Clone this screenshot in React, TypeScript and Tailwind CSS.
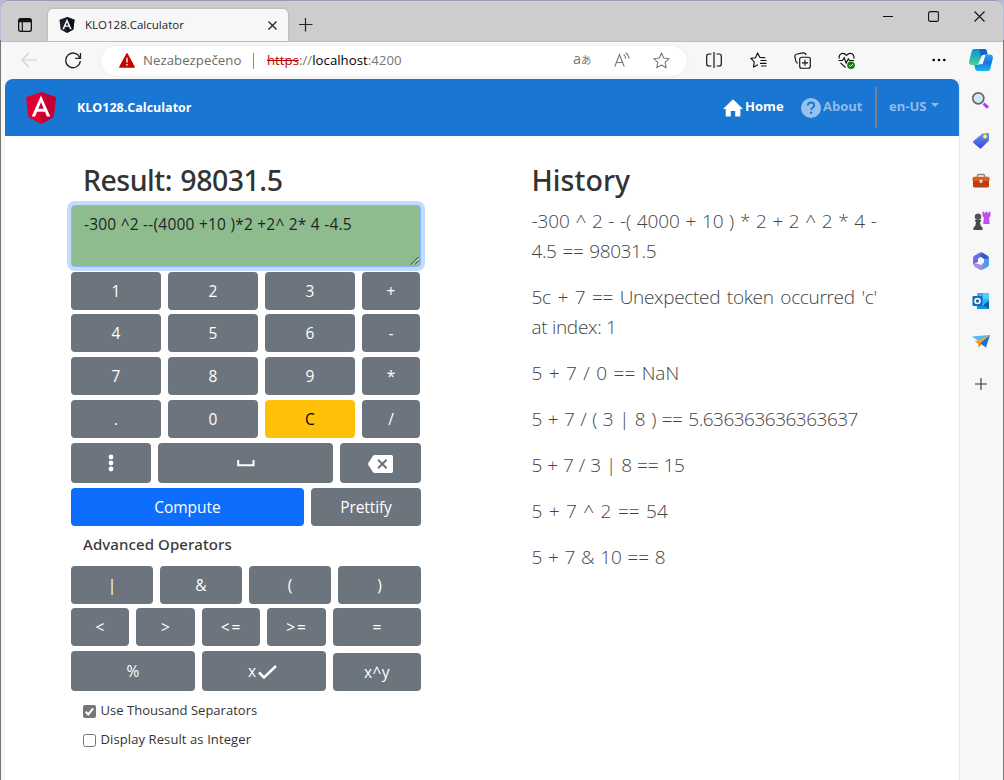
import type { ReactNode } from "react";

type KeyProps = { className?: string; children: ReactNode };

function Key({ className = "", children }: KeyProps) {
  return (
    <button
      className={
        "flex items-center justify-center rounded-[4px] font-['Open_Sans',sans-serif] text-[15.5px] leading-6 " +
        (className.includes("bg-") ? "" : "bg-[#6c757d] ") +
        (className.includes("text-black") ? "" : "text-white ") +
        className
      }
    >
      {children}
    </button>
  );
}

function AngularShield({ dark = false, className }: { dark?: boolean; className: string }) {
  return (
    <svg viewBox="0 0 30 32" className={className}>
      <path d="M15 0 0 5.3 2.3 25 15 32l12.700-7L30 5.300z" fill={dark ? "#1a202b" : "#dd0031"} />
      <path d="M15 0v32l12.700-7L30 5.300z" fill={dark ? "#0d1118" : "#c3002f"} />
      <path d="M15 3.500 5.700 24.400h3.500l1.900-4.700h7.900l1.900 4.700h3.400zM15 10.300l2.700 6.500h-5.400z" fill="#fff" fillRule="evenodd" />
    </svg>
  );
}

function TitleBar() {
  return (
    <div className="flex h-[40px] shrink-0 bg-[#cdcdcd] text-black">
      <div className="flex w-[47px] items-center pl-[17px] pt-[8px]">
        <svg width="14" height="14" viewBox="0 0 14 14">
          <rect x="0.650" y="0.650" width="12.700" height="12.700" rx="2" fill="none" stroke="#111" strokeWidth="1.300" />
          <path d="M1 1h12v3.200H1z" fill="#111" />
          <path d="M4.300 4v9.500" stroke="#111" strokeWidth="1.200" />
        </svg>
      </div>
      <div className="mt-[8px] flex w-[240px] items-center rounded-t-[5px] bg-[#f7f7f7] pl-[11px] pr-[11px] shadow-[0_0_2px_#999]">
        <AngularShield dark className="h-[16px] w-[16px]" />
        <span className="ml-[10px] grow whitespace-nowrap text-[11.500px] text-[#222]">KLO128.Calculator</span>
        <svg width="9" height="9" viewBox="0 0 9 9" className="mt-[1px]">
          <path d="m.5.5 8 8m0-8-8 8" stroke="#222" strokeWidth="1.300" />
        </svg>
      </div>
      <svg width="14" height="14" viewBox="0 0 14 14" className="ml-[11px] mt-[17px]">
        <path d="M6.500 0v13.500M0 6.500h13.500" stroke="#222" strokeWidth="1.200" />
      </svg>
      <div className="ml-auto flex h-[31px] items-center gap-[35px] pr-[18px]">
        <svg width="10" height="10" viewBox="0 0 10 10"><path d="M0 4.500h10" stroke="#111" /></svg>
        <svg width="11" height="11" viewBox="0 0 11 11"><rect x=".6" y=".6" width="9.800" height="9.800" rx="1.500" fill="none" stroke="#111" strokeWidth="1.100" /></svg>
        <svg width="11" height="11" viewBox="0 0 11 11"><path d="m.5.5 10 10m0-10-10 10" stroke="#111" strokeWidth="1.100" /></svg>
      </div>
    </div>
  );
}

const STAR = "m8 1 2.100 4.700 5.200.6-3.900 3.500 1.100 5.100L8 12.300l-4.500 2.600 1.100-5.100L.7 6.300l5.200-.6z";

function Toolbar() {
  return (
    <div className="flex h-[38px] shrink-0 items-center border-t border-[#bdbdbd] bg-[#f7f7f7]">
      <svg width="17" height="16" viewBox="0 0 17 16" className="mb-px ml-[20px]">
        <path d="M16 8H1m7-7L1 8l7 7" fill="none" stroke="#d0d0d0" strokeWidth="1.200" />
      </svg>
      <svg width="18" height="18" viewBox="0 0 18 18" className="mb-px ml-[26px]">
        <path d="M16 7.200A7.300 7.300 0 1 0 16.300 10M16.500 2v5.300h-5.300" fill="none" stroke="#222" strokeWidth="1.300" />
      </svg>
      <div className="ml-[19px] flex h-[30px] w-[586px] items-center rounded-full bg-white pl-[18px] pr-[17px] shadow-[0_0_2px_#ddd]">
        <svg width="16" height="15" viewBox="0 0 16 15">
          <path d="M8 .8 15.200 14H.8z" fill="#c80000" stroke="#c80000" strokeWidth="1.400" strokeLinejoin="round" />
          <path d="M8 4.800v4.700M8 11v1.500" stroke="#fff" strokeWidth="1.400" />
        </svg>
        <span className="ml-[8px] w-[110px] whitespace-nowrap text-[13.200px] tracking-[0.05px] text-[#6b6b6b]">Nezabezpečeno</span>
        <span className="mr-[13px] h-4 w-px bg-[#8a8a8a]" />
        <span className="grow whitespace-nowrap text-[13.200px] tracking-[0.03px] text-[#777]">
          <span className="text-[#c00000] line-through">https</span>://<span className="text-black">localhost</span>:4200
        </span>
        <span className="mb-[3px] flex w-[19px] items-baseline whitespace-nowrap text-[#777]">
          <span className="text-[14.500px] leading-5">a</span>
          <span className="font-['Noto_Sans_CJK_JP',sans-serif] text-[10.500px] leading-3">あ</span>
        </span>
        <svg width="17" height="16" viewBox="0 0 17 16" className="mb-px ml-[22px]">
          <path d="M.8 14.500 5.500 2.500l4.700 12M2.400 10.500h6.200M9.500 2.500c1.500 1 2.200 2.500 2.200 4.200M11.500.7c2.200 1.400 3.300 3.600 3.500 6" fill="none" stroke="#777" strokeWidth="1.100" />
        </svg>
        <svg width="17" height="17" viewBox="0 0 16 16" className="ml-[22px]">
          <path d={STAR} fill="none" stroke="#777" strokeLinejoin="round" />
        </svg>
      </div>
      <svg width="16" height="16" viewBox="0 0 16 16" className="mb-px ml-[19px]">
        <path d="M5.500 2H3Q.7 2 .7 4v8q0 2 2.300 2h2.500M10.500 2H13q2.300 0 2.300 2v8q0 2-2.300 2h-2.500M8 0v16" fill="none" stroke="#111" strokeWidth="1.200" />
      </svg>
      <svg width="17" height="17" viewBox="0 0 17 17" className="mb-px ml-[28px]">
        <path d="M15.500 5.700 10 5.500 7.600.9 5.500 5.700.8 6.400l3.500 3.500-.8 5.200 4.400-2.400M10.500 8.500h6M10 11.300h6.500M11 14h5.500" fill="none" stroke="#111" strokeWidth="1.150" strokeLinejoin="round" />
      </svg>
      <svg width="17" height="17" viewBox="0 0 17 17" className="mb-px ml-[27px]">
        <rect x="5.700" y="5.200" width="10.600" height="11" rx="2" fill="none" stroke="#111" strokeWidth="1.150" />
        <path d="M11 7.800v6M8 10.800h6M3.800 11.300C2 10.500 1.800 9.700 1 5.200.6 3.300 1.400 2.300 3.300 2L9 .9c2-.4 2.700.2 3.200 2.300" fill="none" stroke="#111" strokeWidth="1.150" />
      </svg>
      <svg width="18" height="18" viewBox="0 0 18 18" className="ml-[27px]">
        <path d="M1.200 6.700C.5 3.500 2.500 1.400 4.800 1.400c1.700 0 2.800.8 3.700 2.100 1-1.300 2-2.100 3.700-2.100 2.500 0 4.400 2.300 3.600 5.300M.5 8.500h4l1.700-2.700 2 5.200 2.100-4.200 1.200 1.700h4.500M2.500 10.800l5 4.700" fill="none" stroke="#111" strokeWidth="1.150" />
        <circle cx="13" cy="13.300" r="3.800" fill="#107c10" />
        <path d="m11.200 13.300 1.300 1.300 2.300-2.500" fill="none" stroke="#fff" />
      </svg>
      <svg width="14" height="4" viewBox="0 0 14 4" className="mb-[2px] ml-[76px]">
        <circle cx="1.700" cy="2" r="1.300" /><circle cx="7" cy="2" r="1.300" /><circle cx="12.300" cy="2" r="1.300" />
      </svg>
      <svg width="24" height="22" viewBox="0 0 24 22" className="mb-[2px] ml-[23px]">
        <defs>
          <linearGradient id="cpA" x1="0" y1="0" x2="0" y2="1"><stop offset="0" stopColor="#0a93dc" /><stop offset=".5" stopColor="#1fb2b4" /><stop offset="1" stopColor="#4bd693" /></linearGradient>
          <linearGradient id="cpB" x1="0" y1="0" x2="0" y2="1"><stop offset="0" stopColor="#2ba5f0" /><stop offset=".5" stopColor="#1672dc" /><stop offset="1" stopColor="#17baf0" /></linearGradient>
        </defs>
        <path d="M5 0h10.500c1.500 0 2 .8 2.500 3l.6 2.500h-3c-2 0-3 1-3.600 3L10 13.500c-.7 2-1.500 2.500-3.500 2.500H3C.5 16-.3 14 .3 11.500L2.500 3C3 1 3.500 0 5 0z" fill="url(#cpA)" />
        <path d="M10 0h5.500c1.500 0 2 .8 2.500 3l.6 2.500h-3c-2 0-3 .8-3.600 2.500z" fill="#1662c4" />
        <path d="M19 22H8.500c-1.500 0-2-.8-2.500-3l-.7-3H8c2 0 3-.8 3.600-2.700L13.500 8c.7-2 1.500-2.500 3.500-2.500h4c2.500 0 3.300 2 2.700 4.500L21.500 19c-.5 2-1 3-2.500 3z" fill="url(#cpB)" />
        <path d="M13.500 6h3l-2.900 9.300h-3z" fill="#f7f7f7" />
      </svg>
    </div>
  );
}

function NavBar() {
  return (
    <header className="flex h-[57px] shrink-0 items-center rounded-t-[8px] bg-[#1976d2] pl-[21px] text-white">
      <AngularShield className="h-[32px] w-[30px]" />
      <span className="ml-[21px] mt-[2px] text-[12.500px] font-bold">KLO128.Calculator</span>
      <nav className="ml-auto flex items-center font-bold">
        <svg width="20" height="18" viewBox="0 0 20 18"><path d="M10 .3 20 10h-2.600v7.500h-5.200v-5.600H7.800v5.600H2.700V10H0z" fill="#fff" /></svg>
        <span className="mb-px ml-[2px] w-[56px] text-[13px] tracking-[0.05px]">Home</span>
        <span className="flex items-center text-[#8fbcea]">
          <svg width="20" height="20" viewBox="0 0 20 20">
            <circle cx="10" cy="10" r="10" fill="#98c2ee" />
            <path d="M6.800 7.500C7 5.400 8.300 4.500 10 4.500c1.800 0 3.200 1 3.200 2.700 0 2.400-3.100 2.500-3.100 4.800" fill="none" stroke="#1976d2" strokeWidth="1.900" />
            <circle cx="10.100" cy="14.800" r="1.250" fill="#1976d2" />
          </svg>
          <span className="mb-px ml-[2px] w-[52px] text-[13px] font-bold">About</span>
        </span>
        <span className="h-[41px] w-[2px] bg-[#7d8088]" />
        <span className="mb-px ml-[12px] w-[42px] whitespace-nowrap text-[13px] font-bold">
          <span className="text-[#8fbcea]">en-US</span>
        </span>
        <svg width="8" height="4" viewBox="0 0 8 4" className="mb-[5px] mr-[20px]"><path d="M0 0h8L4 4z" fill="#8fbcea" /></svg>
      </nav>
    </header>
  );
}

function DigitRow({ labels }: { labels: string[] }) {
  return (
    <div className="grid h-[38px] grid-cols-[90px_90px_90px_58px] gap-x-[7px]">
      {labels.map((label) => (
        <Key key={label} className={label === "C" ? "bg-[#ffc107] text-black" : ""}>{label}</Key>
      ))}
    </div>
  );
}

function Calculator() {
  return (
    <section className="flex w-[350px] flex-col">
      <h2 className="ml-[12px] h-[43px] whitespace-nowrap font-['Noto_Sans',sans-serif] text-[28.500px] font-medium leading-[36px] tracking-[-0.5px] text-[#333] [word-spacing:1.500px]">
        Result: 98031.5
      </h2>
      <div className="relative h-[62px] rounded-[4px] border border-[#86b7fe] bg-[#8fbc8f] px-3 pt-[6px] text-[15.500px] leading-6 text-[#212529] shadow-[0_0_0_4px_#c2dbfe]">
        <span className="whitespace-nowrap tracking-[0.22px]">-300 ^2 --(4000 +10 )*2 +2^ 2* 4 -4.5</span>
        <svg width="9" height="9" viewBox="0 0 9 9" className="absolute bottom-px right-px">
          <path d="M1 8.500 8.500 1M5 8.500 8.500 5" stroke="#333" strokeWidth="1" />
          <path d="M2.200 8.700 8.700 2.200M6.200 8.700l2.500-2.500" stroke="#dfe" strokeWidth=".6" />
        </svg>
      </div>
      <div className="mt-[5px] flex flex-col gap-[5px]">
        <div className="flex flex-col gap-[4px]">
          <DigitRow labels={["1", "2", "3", "+"]} />
          <DigitRow labels={["4", "5", "6", "-"]} />
        </div>
        <DigitRow labels={["7", "8", "9", "*"]} />
        <DigitRow labels={[".", "0", "C", "/"]} />
      </div>
      <div className="mt-[5px] flex h-[40px] gap-[7px]">
        <Key className="w-[80px]">
          <svg width="6" height="18" viewBox="0 0 6 18"><circle cx="3" cy="3" r="2.400" fill="#fff" /><circle cx="3" cy="9" r="2.400" fill="#fff" /><circle cx="3" cy="15" r="2.400" fill="#fff" /></svg>
        </Key>
        <Key className="w-[175px]">
          <svg width="18" height="8" viewBox="0 0 18 8"><path d="M1.200 1v5.300h15.300V1" fill="none" stroke="#fff" strokeWidth="2" /></svg>
        </Key>
        <Key className="w-[81px]">
          <svg width="25" height="18" viewBox="0 0 25 18" className="mt-[2px]">
            <path d="M6.500 0H23q2 0 2 2v14q0 2-2 2H6.500q-1 0-1.600-.9L.3 10q-.5-1 0-2L4.900.9Q5.500 0 6.500 0z" fill="#fff" />
            <path d="m10 4.700 8.600 8.600m0-8.600L10 13.300" stroke="#6c757d" strokeWidth="2" />
          </svg>
        </Key>
      </div>
      <div className="mt-[5px] flex h-[38px] gap-[7px]">
        <Key className="w-[233px] bg-[#0d6efd]">Compute</Key>
        <Key className="w-[110px] tracking-[-0.1px]">Prettify</Key>
      </div>
      <h3 className="ml-[12px] mt-[7px] h-[33px] font-['Noto_Sans',sans-serif] text-[15px] font-medium leading-[22px] tracking-[0.1px] text-[#3a3a3a]">
        Advanced Operators
      </h3>
      <div className="flex h-[38px] gap-[7px]">
        <Key className="w-[82px]">|</Key><Key className="w-[82px]">&amp;</Key><Key className="w-[82px]">(</Key><Key className="w-[83px]">)</Key>
      </div>
      <div className="mt-[4px] flex h-[38px] gap-[7px]">
        <Key className="w-[58px]">&lt;</Key><Key className="w-[59px]">&gt;</Key>
        <Key className="w-[58px] pl-px tracking-[2px]">&lt;=</Key><Key className="w-[59px] pl-px tracking-[2px]">&gt;=</Key>
        <Key className="w-[88px]">=</Key>
      </div>
      <div className="mt-[5px] flex h-[40px] items-end gap-[7px]">
        <Key className="h-[40px] w-[124px]">%</Key>
        <Key className="h-[40px] w-[124px] pr-[3px]">
          x
          <svg width="19" height="14" viewBox="0 0 19 14" className="ml-[2px] mt-[2px]"><path d="m1 7.500 5 5L18 1" fill="none" stroke="#fff" strokeWidth="2.500" /></svg>
        </Key>
        <Key className="h-[38px] w-[88px] tracking-[0.4px]">x^y</Key>
      </div>
      <label className="ml-[12px] mt-[10px] flex h-5 items-center text-[13px] tracking-[0.03px] text-[#333]">
        <svg width="13" height="13" viewBox="0 0 13 13" className="mr-[4.500px]">
          <rect width="13" height="13" rx="2" fill="#767676" />
          <path d="m2.700 6.800 2.500 2.700 5-6.200" fill="none" stroke="#fff" strokeWidth="2" />
        </svg>
        Use Thousand Separators
      </label>
      <label className="ml-[12px] mt-[9px] flex h-5 items-center text-[13px] tracking-[0.1px] text-[#333]">
        <svg width="13" height="13" viewBox="0 0 13 13" className="mr-[4.500px]">
          <rect x=".5" y=".5" width="12" height="12" rx="2" fill="#fff" stroke="#767676" />
        </svg>
        Display Result as Integer
      </label>
    </section>
  );
}

function History() {
  return (
    <section className="ml-[110.500px] whitespace-nowrap">
      <h2 className="h-[44px] font-['Noto_Sans',sans-serif] text-[28.500px] font-medium leading-[36px] tracking-[0.05px] text-[#333]">History</h2>
      <div className="flex flex-col gap-4 text-[19px] font-light leading-[30px] text-[#444]">
        <p>
          <span className="block tracking-[-0.1px] [word-spacing:0.860px]">-300 ^ 2 - -( 4000 + 10 ) * 2 + 2 ^ 2 * 4 -</span>
          <span className="block tracking-[-0.4px] [word-spacing:1.400px]">4.5 == 98031.5</span>
        </p>
        <p>
          <span className="block tracking-[-0.32px] [word-spacing:2.100px]">5c + 7 == Unexpected token occurred 'c'</span>
          <span className="block tracking-[-0.3px]">at index: 1</span>
        </p>
        <p className="[word-spacing:1.500px]">5 + 7 / 0 == NaN</p>
        <p className="tracking-[-0.5px] [word-spacing:1.500px]">5 + 7 / ( 3 | 8 ) == 5.636363636363637</p>
        <p className="tracking-[-0.2px] [word-spacing:0.400px]">5 + 7 / 3 | 8 == 15</p>
        <p className="[word-spacing:1.500px]">5 + 7 ^ 2 == 54</p>
        <p className="[word-spacing:0.700px]">5 + 7 &amp; 10 == 8</p>
      </div>
    </section>
  );
}

function SideIcon({ children }: { children: ReactNode }) {
  return (
    <span className="flex h-10 w-full items-center justify-center pr-[2px]">
      <svg width="20" height="20" viewBox="0 0 20 20">{children}</svg>
    </span>
  );
}

function Sidebar() {
  return (
    <aside className="flex w-[44px] shrink-0 flex-col border-l border-[#e6e6e6] bg-[#f7f7f7] pt-[2px]">
      <SideIcon>
        <path d="m12.500 12.500 4.500 4.200" stroke="#b438f5" strokeWidth="3" />
        <circle cx="7.300" cy="7.300" r="5.500" fill="#cdeafa" stroke="#666" strokeWidth="1.700" />
      </SideIcon>
      <SideIcon>
        <defs><linearGradient id="tag" x1="0" y1="0" x2="0" y2="1"><stop stopColor="#5f9cf8" /><stop offset="1" stopColor="#3c42d9" /></linearGradient></defs>
        <path d="M11.500 2.500 17 2q1 0 1 1v6.500L10.500 17q-1 1-2 0L2.500 12q-1-1 0-2z" fill="url(#tag)" />
        <circle cx="14" cy="5.500" r="1.900" fill="#fff2b0" stroke="#f0b429" />
      </SideIcon>
      <SideIcon>
        <path d="M6.500 6V4.500q0-1 1-1h5q1 0 1 1V6" fill="none" stroke="#888" strokeWidth="1.400" />
        <path d="M3 5.700h14q1.500 0 1.500 1.500V10h-17V7.200q0-1.500 1.500-1.500z" fill="#e05c1c" />
        <path d="M2 10h16v5q0 1.500-1.500 1.500h-13Q2 16.500 2 15z" fill="#c03e0b" />
        <rect x="8.500" y="8.500" width="3" height="3.500" rx="1.200" fill="#ddd" />
      </SideIcon>
      <SideIcon>
        <path d="M11.500.8h1.800v1.500h1.200V.8h2v1.500h1.200V.8h1.800V5L18 6.500l.7 6.500h-6.500l.8-6.500L11.500 5z" fill="#bd4df0" />
        <circle cx="7" cy="5.800" r="3.200" fill="#555" />
        <path d="M4 9h6v1.500L8.800 11l1 4 1.700 1.500V19h-9v-2.500L4.200 15l1-4L4 10.500z" fill="#484848" />
      </SideIcon>
      <SideIcon>
        <path d="M10 1 4 4.200Q2 5.300 2 7.500v6l5-2.500V7.800L13.500 3z" fill="#6b6ee0" />
        <path d="M10 1l6 3.300q2 1 2 3.300v5L13 11V8L8.500 5 12 1.800z" fill="#3857c4" />
        <path d="M18 8v5q0 2-2 3l-6 3.200L4 16l-2-3.500L7.500 13l2.500 1 3-3z" fill="#a58cdc" />
        <path d="M18 7.500v5.700q0 2-2 3L10.500 19 13 12V8z" fill="#4f9ae8" />
      </SideIcon>
      <SideIcon>
        <rect x="6" y="2" width="12" height="11" rx="1" fill="#32b1ee" />
        <path d="M12 2h5q1 0 1 1v5h-6z" fill="#50d0f8" />
        <path d="M6 18V10l6 4 6-4v7q0 1-1 1z" fill="#1493df" />
        <path d="m18 10-6 4 6 4z" fill="#0b62ab" />
        <rect x="1.500" y="5" width="10" height="10" rx="1" fill="#0f6cbd" />
        <circle cx="6.500" cy="10" r="2.500" fill="none" stroke="#fff" strokeWidth="1.600" />
      </SideIcon>
      <SideIcon>
        <path d="M1 5.500 19 4 9 11z" fill="#51b8fa" />
        <path d="M19 4 15 16.500 8.500 12z" fill="#1673d5" />
        <path d="M4 10.500 19 4 7.500 13.500z" fill="#f5a524" />
        <path d="M7.500 12v4.500l3-3z" fill="#d98212" />
      </SideIcon>
      <span className="mt-[3px] flex h-10 items-center justify-center pr-[2px]">
        <svg width="12" height="12" viewBox="0 0 12 12"><path d="M6 0v12M0 6h12" stroke="#333" strokeWidth="1.100" /></svg>
      </span>
    </aside>
  );
}

export default function App() {
  return (
    <div className="h-[780px] w-[1004px] overflow-hidden bg-[linear-gradient(#b7badb_40px,#777_40px)] px-px pt-px font-['Open_Sans',sans-serif]">
      <div className="flex h-full flex-col overflow-hidden rounded-t-[8px] bg-[#f7f7f7] shadow-[0_-1px_0_#9a9cb0]">
        <TitleBar />
        <Toolbar />
        <div className="flex min-h-0 grow pl-[4px]">
          <div className="flex w-[954px] flex-col rounded-t-[8px] bg-white">
            <NavBar />
            <main className="flex pl-[66px] pt-[26px]">
              <Calculator />
              <History />
            </main>
          </div>
          <Sidebar />
        </div>
      </div>
    </div>
  );
}
